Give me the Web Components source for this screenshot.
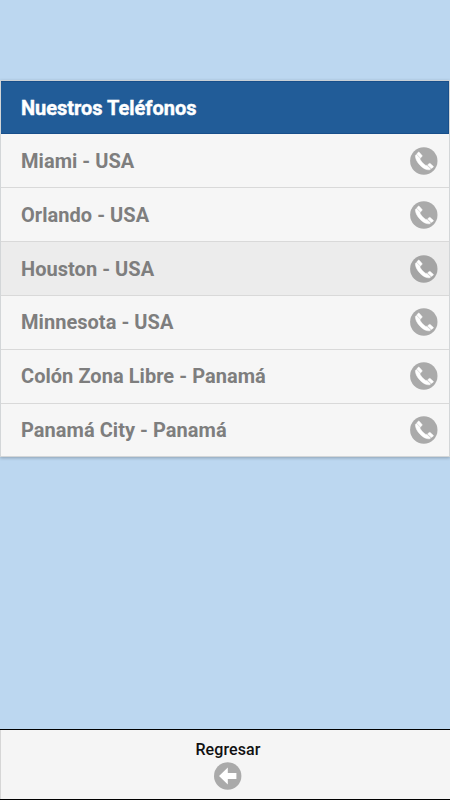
<!DOCTYPE html>
<html lang="es">
<head>
<meta charset="utf-8">
<meta name="viewport" content="width=device-width, initial-scale=1">
<title>Nuestros Teléfonos</title>
<style>
  html, body {
    margin: 0;
    height: 100%;
  }

  body {
    font-family: Roboto, "Liberation Sans", sans-serif;
    background: #bcd7f0;
    overflow: hidden;
  }
</style>
</head>
<body>
<phone-page>
  <phone-list heading="Nuestros Teléfonos">
    <phone-item>Miami - USA</phone-item>
    <phone-item>Orlando - USA</phone-item>
    <phone-item active>Houston - USA</phone-item>
    <phone-item>Minnesota - USA</phone-item>
    <phone-item>Colón Zona Libre - Panamá</phone-item>
    <phone-item>Panamá City - Panamá</phone-item>
  </phone-list>
  <back-bar slot="footer">Regresar</back-bar>
</phone-page>

<script>
const define = (name, html) => {
  const template = document.createElement("template");
  template.innerHTML = html;
  customElements.define(name, class extends HTMLElement {
    constructor() {
      super();
      this.attachShadow({ mode: "open" }).appendChild(template.content.cloneNode(true));
    }

    connectedCallback() {
      const heading = this.shadowRoot.querySelector("h1");
      if (heading) heading.textContent = this.getAttribute("heading");
    }
  });
};

define("phone-icon", `
  <style>
    :host { display: block; width: 28px; height: 28px; }
    svg { display: block; }
  </style>
  <svg width="28" height="28" viewBox="0 0 28 28">
    <circle cx="13.8" cy="14" r="13.7" fill="var(--disc, #aaa)"/>
    <g fill="#fff" stroke="#fff" stroke-width=".5" stroke-linejoin="round">
      <path d="M5.4 8.4C5.2 11.4 6.9 14.9 10 18.2C13.2 21.5 16.9 23.3 19.8 22.7L20.7 21.9L16.9 18.4L15.8 18.4C13.8 17.3 11 14.5 10 12.2L10.1 11.4L6.4 7.6Z"/>
      <path d="M6.7 6.9L8.3 5.3Q8.9 4.9 9.4 5.4L12 8.4Q12.4 9 11.9 9.5L10.4 11.1Z"/>
      <path d="M17.6 18L19.1 16.6Q19.6 16.2 20.2 16.6L23.2 19.2Q23.6 19.7 23.2 20.2L21.4 21.4Z"/>
    </g>
  </svg>
`);

define("back-icon", `
  <style>
    :host { display: block; width: 28px; height: 28px; }
    svg { display: block; }
  </style>
  <svg width="28" height="28" viewBox="0 0 28 28">
    <circle cx="13.7" cy="14" r="13.7" fill="#aaa"/>
    <path fill="#fff" d="M5 14L13.8 5.6V11H22.4V17H13.8V22.4Z"/>
  </svg>
`);

define("phone-item", `
  <style>
    :host {
      display: flex;
      flex: none;
      align-items: center;
      justify-content: space-between;
      box-sizing: border-box;
      height: 53.8px;
      padding: 0 11.5px 0 20px;
      border-bottom: 1px solid #d9d9d9;
      background: #f6f6f6;
      color: #7e7e7e;
      font-size: 20px;
      font-weight: 700;
      line-height: 24px;
    }
    :host([active]) { background: #ececec; --disc: #a4a4a4; }
    /* the list's own border closes the last row */
    :host(:last-child) { height: 52.4px; border-bottom: 0; }
    span { letter-spacing: .04px; white-space: nowrap; }
  </style>
  <span><slot></slot></span>
  <phone-icon></phone-icon>
`);

define("phone-list", `
  <style>
    :host {
      display: flex;
      flex-direction: column;
      box-sizing: border-box;
      height: 377px;
      border: 1px solid #d3d6d8;
      border-top-color: #c9d0d6;
      background: #f6f6f6;
      box-shadow: 0 1px 3px rgba(0, 0, 0, .25);
    }
    h1 {
      flex: none;
      box-sizing: border-box;
      height: 53px;
      margin: 0 0 .7px;
      padding: 14px 20px 0;
      border: 1px solid #184f8b;
      border-width: 1px 1px 1px 0;
      background: #215c98;
      color: #fff;
      font-size: 20px;
      font-weight: 700;
      line-height: 24px;
      letter-spacing: -.02px;
      -webkit-text-stroke: .4px #fff;
    }
  </style>
  <h1></h1>
  <slot></slot>
`);

define("back-bar", `
  <style>
    :host {
      display: flex;
      flex-direction: column;
      align-items: center;
      box-sizing: border-box;
      height: 71px;
      padding: 11px 0 0 6px;
      border: solid #000;
      border-width: 1px 0;
      background: linear-gradient(90deg, #d6d6d6 1px, #f5f5f5 1px);
      color: #111;
      font-size: 16px;
      font-weight: 500;
      line-height: 18px;
      letter-spacing: .1px;
    }
    back-icon { margin-top: 3px; }
  </style>
  <span><slot></slot></span>
  <back-icon></back-icon>
`);

define("phone-page", `
  <style>
    :host {
      display: flex;
      flex-direction: column;
      justify-content: space-between;
      box-sizing: border-box;
      height: 800px;
      padding-top: 80px;
    }
  </style>
  <slot></slot>
  <slot name="footer"></slot>
`);
</script>
</body>
</html>
